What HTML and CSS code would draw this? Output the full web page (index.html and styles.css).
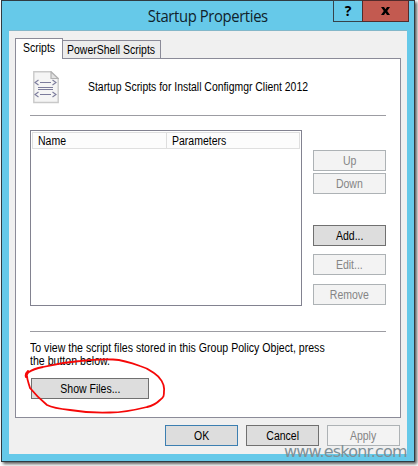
FILE: index.html
```
<!DOCTYPE html>
<html lang="en">
<head>
<meta charset="utf-8">
<title>Startup Properties</title>
<link rel="stylesheet" href="styles.css">
</head>
<body>
<div class="window">
  <header class="titlebar">
    <h1 class="title">Startup Properties</h1>
    <div class="controls">
      <button class="help">?</button>
      <button class="close" aria-label="Close"><svg width="9" height="8" viewBox="0 0 9 8"><path d="M0 0H3L4.500 2.200 6 0H9L6.200 4 9 8H6L4.500 5.700 3 8H0L2.800 4Z" fill="#000"/></svg></button>
    </div>
  </header>
  <main class="client">
    <nav class="tabs">
      <div class="tab active"><span>Scripts</span></div>
      <div class="tab"><span>PowerShell Scripts</span></div>
    </nav>
    <section class="panel">
      <div class="intro">
        <svg class="doc" width="26" height="33" viewBox="0 0 26 33">
          <path d="M.8.8H18L25.2 7.5V31.5H.8Z" fill="#f5f5f5" stroke="#c9c9c9" stroke-width="1.4"/>
          <path d="M18 .8V7.5H25.2Z" fill="#e2e2e2" stroke="#b2b2b2" stroke-width="1.2"/>
          <g fill="none" stroke="#7c7c9c" stroke-width="1.1"><path d="M5.500 9 2 11.500 5.500 14M19.500 9 23 11.500 19.500 14M7 11.500H18M5 16.500H20M5 18.500H20M5.500 21 2 23.500 5.500 26M19.500 21 23 23.500 19.500 26M7 23.500H18"/></g>
        </svg>
        <span class="t-intro">Startup Scripts for Install Configmgr Client 2012</span>
      </div>
      <hr>
      <div class="content">
        <div class="list">
          <div class="list-head"><div class="col name"><span>Name</span></div><div class="col"><span>Parameters</span></div></div>
        </div>
        <div class="actions">
          <button class="btn off"><span>Up</span></button>
          <button class="btn off down"><span>Down</span></button>
          <button class="btn add"><span>Add...</span></button>
          <button class="btn off edit"><span>Edit...</span></button>
          <button class="btn off remove"><span>Remove</span></button>
        </div>
      </div>
      <hr class="second">
      <p class="note"><span>To view the script files stored in this Group Policy Object, press<br>the button below.</span></p>
      <div class="show-wrap">
        <button class="btn show"><span>Show Files...</span></button>
        <svg class="ring" width="144" height="58" viewBox="0 0 144 58"><path d="M4 13C2 15 1 17 2 19C3 17 3 15 5 14C9 11 14 10 19 9C31 6 43 4 56 3C67 1.500 79 1 89 1.500C99 2 108 5 116 8C122 9.500 126 12 130 15C136 19 141 26 140 33C140 38 140 39 136 42C132 46 128 48 123 49C111 52 99 54.500 86 54.500C72 55 58 54 46 52C37 51 29 50 23 47C17 42 10 35 6 30C5 26 3 22 3 18" fill="none" stroke="#f50808" stroke-width="1.8" stroke-linecap="round" stroke-linejoin="round"/></svg>
      </div>
    </section>
    <footer class="footer">
      <button class="btn ok"><span>OK</span></button>
      <button class="btn"><span>Cancel</span></button>
      <button class="btn off"><span>Apply</span></button>
    </footer>
  </main>
  <div class="watermark">www.eskonr.com</div>
</div>
</body>
</html>
```
FILE: styles.css
```
* { box-sizing: border-box; }
body {
  margin: 0; height: 466px; overflow: hidden; background: #fff;
  font: 12px/13px "Liberation Sans", Arial, sans-serif; color: #000;
}
button { font: inherit; color: inherit; padding: 0; margin: 0; }
span { display: inline-block; white-space: nowrap; transform: scaleX(.875); transform-origin: 0 50%; }
.window {
  position: relative; width: 414px; height: 462px; margin-left: 1px; padding: 0 7px 7px;
  border: 1px solid #303b42; background: #66c9e9;
  box-shadow: 2px 2px 3px rgba(0,0,0,.65);
}
.titlebar { display: flex; height: 29px; position: relative; justify-content: center; }
.title {
  margin: 4px 0 0; font: 16px/22px "Open Sans", "Noto Sans", sans-serif; letter-spacing: -0.4px; color: #10222b;
  transform: scaleX(.925);
}
.controls { position: absolute; right: -2px; top: -1px; display: flex; height: 22px; }
.help, .close { border: 1px solid #36434a; background: #66c9e9; display: flex; align-items: center; justify-content: center; }
.help { width: 29px; border-right: 0; font: bold 14px/18px "Open Sans", sans-serif; }
.close { width: 47px; background: #c35a50; border-color: #532b2b; }
.client { height: 424px; padding: 7px 6px 8px; background: #f0f0f0; border-top: 1px solid #83b7c9; }
.tabs { display: flex; height: 20px; align-items: flex-end; }
.tab { height: 18px; width: 98px; border: 1px solid #8b8b98; border-bottom: 0; border-left: 0; background: #ececec; padding: 3px 0 0 4px; }
.tab.active { position: relative; height: 21px; width: 48px; margin-bottom: -1px; border-left: 1px solid #8b8b98; background: #fff; padding: 3px 0 0 7px; z-index: 1; }
.panel { height: 360px; border: 1px solid #8b8b98; background: #fff; padding: 12px 14px 0; }
.intro { height: 44px; display: flex; padding-left: 3px; }
.doc { flex: none; margin-right: 29px; }
.t-intro { margin-top: 10px; transform: scaleX(.868); }
hr { height: 1px; border: 0; margin: 0; background: #9c9ca2; }
.content { display: flex; justify-content: space-between; margin-top: 14px; height: 176px; }
.list { width: 272px; border: 1px solid #828290; padding: 1px; }
.list-head { display: flex; height: 17px; border: 1px solid #dfdfdf; background: #fcfcfc; }
.col { padding: 2px 0 0 5px; }
.name { width: 134px; border-right: 1px solid #dedede; }
.actions { width: 73px; padding-top: 20px; }
.btn { display: block; flex: none; width: 73px; height: 21px; background: #ddd; border: 1px solid #707070; line-height: 19px; text-align: center; }
.btn span { position: relative; top: 1px; transform-origin: 50% 50%; }
.btn.off { background: #f3f3f3; border-color: #adb2b5; color: #858585; }
.down { margin-top: 2px; }
.add { margin-top: 31px; }
.edit { margin-top: 8px; }
.remove { margin-top: 9px; }
hr.second { margin-top: 25px; }
.note { margin: 0; padding-top: 10px; height: 46px; }
.note span { transform: scaleX(.882); }
.show-wrap { position: relative; height: 21px; }
.btn.show { width: 118px; margin-left: 1px; }
.ring { position: absolute; left: -6px; top: -20px; }
.footer { display: flex; justify-content: flex-end; gap: 8px; padding: 7px 1px 0 0; }
.btn.ok { border-color: #3c7fb1; }
.watermark { position: absolute; left: 282px; top: 441px; font: 16px/20px "DejaVu Sans", sans-serif; letter-spacing: -0.8px; color: #7f8f96; }
```
